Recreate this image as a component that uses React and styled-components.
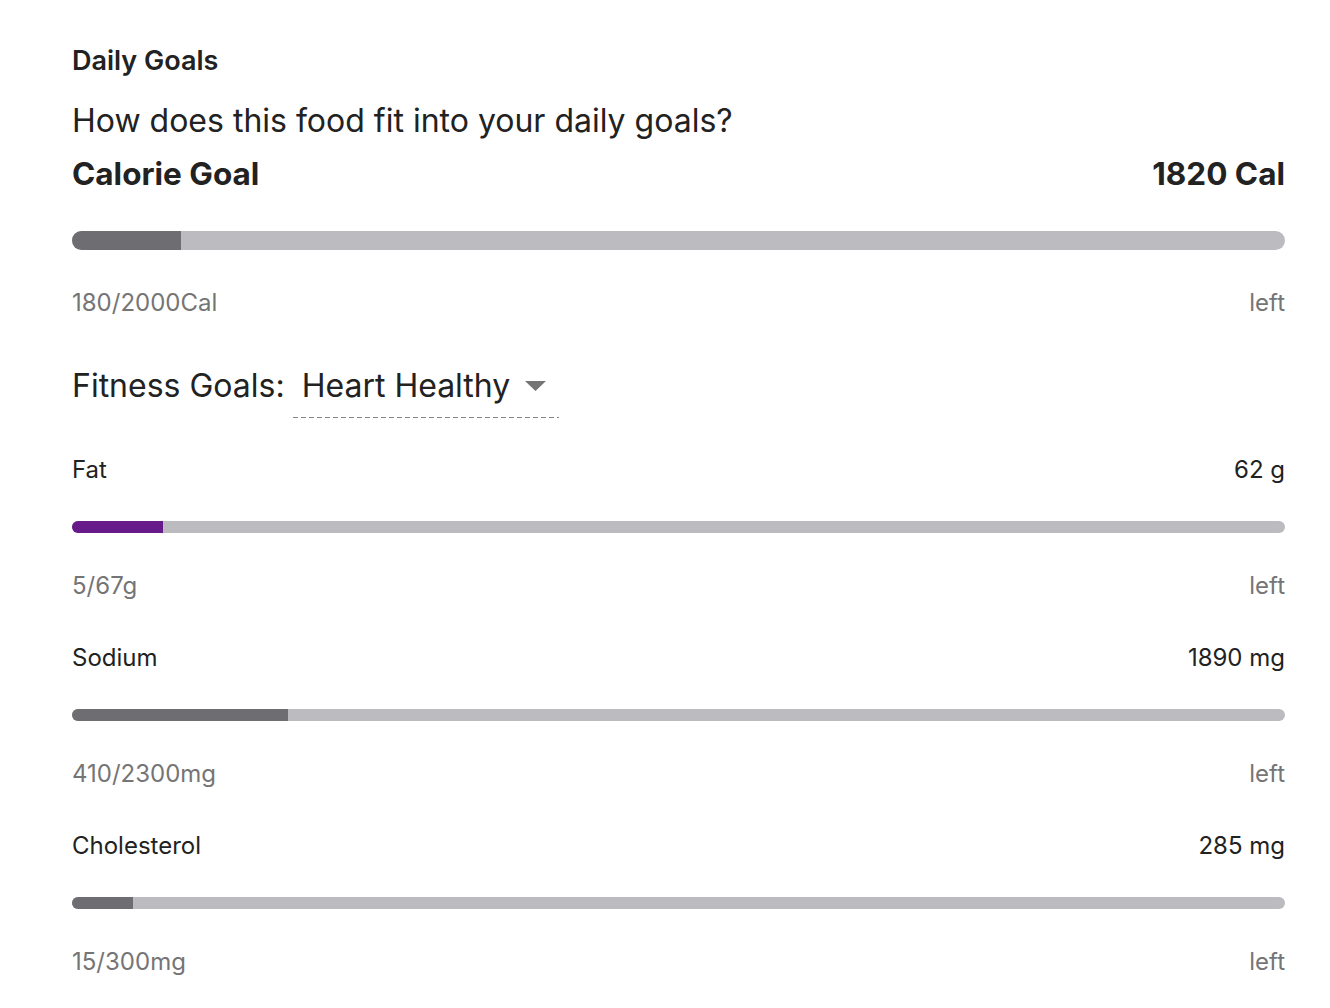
import React from "react";
import styled, { createGlobalStyle } from "styled-components";

const GlobalStyle = createGlobalStyle`
  body {
    margin: 0;
    background: #ffffff;
    font-family: Inter, "Noto Sans", sans-serif;
    color: #222222;
  }
`;

const PageUI = styled.div`
  padding: 46px 45px 40px 72px;
  display: flex;
  flex-direction: column;
`;

const HeadingUI = styled.div`
  font-size: 27px;
  font-weight: 600;
  line-height: 30px;
  color: #222222;
`;

const QuestionUI = styled.div`
  margin-top: 25px;
  font-size: 32px;
  line-height: 40px;
  color: #222222;
`;

const RowUI = styled.div`
  display: flex;
  justify-content: space-between;
  align-items: center;
  margin-top: ${(p) => p.$gap || 0}px;
`;

const BigLabelUI = styled.div`
  font-size: 31.5px;
  font-weight: 700;
  line-height: 36px;
`;

const LabelUI = styled.div`
  padding-top: 2px;
  font-size: 24px;
  line-height: 30px;
  color: #222222;
`;

const SubUI = styled.div`
  padding-top: 2px;
  font-size: 24px;
  line-height: 30px;
  color: #757575;
`;

const TrackUI = styled.div`
  height: ${(p) => p.$h}px;
  margin-top: ${(p) => p.$gap}px;
  background: #bcbbc0;
  border-radius: ${(p) => p.$h / 2}px;
  overflow: hidden;
`;

const FillUI = styled.div`
  height: 100%;
  background: ${(p) => p.$color};
`;

const FitnessRowUI = styled.div`
  display: flex;
  align-items: flex-start;
  margin-top: 48px;
  gap: 8px;
`;

const FitnessLabelUI = styled.div`
  font-size: 32px;
  line-height: 40px;
  color: #222222;
`;

const SelectUI = styled.div`
  display: flex;
  align-items: center;
  gap: 15px;
  padding: 0 13px 12px 9px;
  font-size: 32px;
  line-height: 40px;
  color: #222222;
  background-image: linear-gradient(to right, #858585 62%, transparent 62%);
  background-size: 8px 1px;
  background-repeat: repeat-x;
  background-position: left bottom;
  cursor: pointer;
`;

const NutrientUI = styled.div`
  margin-top: ${(p) => p.$gap}px;
`;

const nutrients = [
  { name: "Fat", left: "62 g", used: 5, goal: 67, unit: "g", color: "#671a8a" },
  { name: "Sodium", left: "1890 mg", used: 410, goal: 2300, unit: "mg", color: "#6e6d72" },
  { name: "Cholesterol", left: "285 mg", used: 15, goal: 300, unit: "mg", color: "#6e6d72" },
];

const Bar = ({ used, goal, color, h, gap }) => (
  <TrackUI $h={h} $gap={gap}>
    <FillUI $color={color} style={{ width: `${(used / goal) * 100}%` }} />
  </TrackUI>
);

export default function App() {
  return (
    <>
      <GlobalStyle />
      <PageUI>
        <HeadingUI>Daily Goals</HeadingUI>
        <QuestionUI>How does this food fit into your daily goals?</QuestionUI>
        <RowUI $gap={15}>
          <BigLabelUI>Calorie Goal</BigLabelUI>
          <BigLabelUI>1820 Cal</BigLabelUI>
        </RowUI>
        <Bar used={180} goal={2000} color="#6e6d72" h={19} gap={39} />
        <RowUI $gap={36}>
          <SubUI>180/2000Cal</SubUI>
          <SubUI>left</SubUI>
        </RowUI>

        <FitnessRowUI>
          <FitnessLabelUI>Fitness Goals:</FitnessLabelUI>
          <SelectUI>
            Heart Healthy
            <svg width="21" height="10" viewBox="0 0 21 10">
              <path d="M0 0 L21 0 L10.5 10 Z" fill="#757575" />
            </svg>
          </SelectUI>
        </FitnessRowUI>

        {nutrients.map((n, i) => (
          <NutrientUI key={n.name} $gap={i === 0 ? 35 : 40}>
            <RowUI>
              <LabelUI>{n.name}</LabelUI>
              <LabelUI>{n.left}</LabelUI>
            </RowUI>
            <Bar used={n.used} goal={n.goal} color={n.color} h={12} gap={36} />
            <RowUI $gap={36}>
              <SubUI>
                {n.used}/{n.goal}
                {n.unit}
              </SubUI>
              <SubUI>left</SubUI>
            </RowUI>
          </NutrientUI>
        ))}
      </PageUI>
    </>
  );
}
